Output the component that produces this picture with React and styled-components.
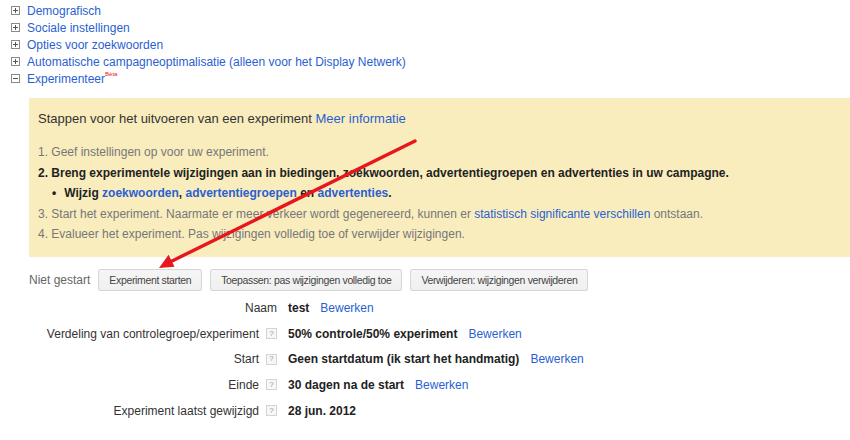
import React from "react";
import styled, { createGlobalStyle } from "styled-components";

const GlobalStyle = createGlobalStyle`
  html, body {
    margin: 0;
    padding: 0;
    background: #fff;
  }
  body {
    font-family: "Liberation Sans", Arial, sans-serif;
    font-size: 12px;
    color: #333;
  }
`;

const sections = [
  { label: "Demografisch", open: false },
  { label: "Sociale instellingen", open: false },
  { label: "Opties voor zoekwoorden", open: false },
  {
    label: "Automatische campagneoptimalisatie (alleen voor het Display Netwerk)",
    open: false,
  },
  { label: "Experimenteer", open: true, beta: true },
];

const details = [
  { label: "Naam", value: "test", edit: true },
  {
    label: "Verdeling van controlegroep/experiment",
    help: true,
    value: "50% controle/50% experiment",
    edit: true,
  },
  {
    label: "Start",
    help: true,
    value: "Geen startdatum (ik start het handmatig)",
    edit: true,
  },
  { label: "Einde", help: true, value: "30 dagen na de start", edit: true },
  { label: "Experiment laatst gewijzigd", help: true, value: "28 jun. 2012" },
];

const ToggleIcon = ({ open }) => (
  <svg width="9" height="9" viewBox="0 0 9 9">
    <rect x="0.5" y="0.5" width="8" height="8" fill="#fff" stroke="#8a8a8a" />
    <line x1="2" y1="4.5" x2="7" y2="4.5" stroke="#555" />
    {!open && <line x1="4.5" y1="2" x2="4.5" y2="7" stroke="#555" />}
  </svg>
);

const App = () => {
  return (
    <>
      <GlobalStyle />
      <Page>
        <SectionList>
          {sections.map((s) => (
            <SectionItem key={s.label}>
              <ToggleIcon open={s.open} />
              <Link href="#">
                {s.label}
                {s.beta && <Beta>Bèta</Beta>}
              </Link>
            </SectionItem>
          ))}
        </SectionList>

        <StepsPanel>
          <PanelTitle>
            Stappen voor het uitvoeren van een experiment{" "}
            <Link href="#">Meer informatie</Link>
          </PanelTitle>
          <Steps>
            <Step>1. Geef instellingen op voor uw experiment.</Step>
            <Step active>
              2. Breng experimentele wijzigingen aan in biedingen, zoekwoorden,
              advertentiegroepen en advertenties in uw campagne.
            </Step>
            <SubStep>
              Wijzig <Link href="#">zoekwoorden</Link>,{" "}
              <Link href="#">advertentiegroepen</Link> en{" "}
              <Link href="#">advertenties</Link>.
            </SubStep>
            <Step>
              3. Start het experiment. Naarmate er meer verkeer wordt
              gegenereerd, kunnen er{" "}
              <Link href="#">statistisch significante verschillen</Link>{" "}
              ontstaan.
            </Step>
            <Step>
              4. Evalueer het experiment. Pas wijzigingen volledig toe of
              verwijder wijzigingen.
            </Step>
          </Steps>
        </StepsPanel>

        <ActionBar>
          <Status>Niet gestart</Status>
          <Button>Experiment starten</Button>
          <Button>Toepassen: pas wijzigingen volledig toe</Button>
          <Button>Verwijderen: wijzigingen verwijderen</Button>
        </ActionBar>

        <DetailsGrid>
          {details.map((d) => (
            <React.Fragment key={d.label}>
              <DetailLabel>
                {d.label}
                {d.help && <HelpIcon>?</HelpIcon>}
              </DetailLabel>
              <DetailValue>
                <strong>{d.value}</strong>
                {d.edit && <Link href="#">Bewerken</Link>}
              </DetailValue>
            </React.Fragment>
          ))}
        </DetailsGrid>

        <ArrowOverlay width="850" height="440" viewBox="0 0 850 440">
          <line
            x1="415"
            y1="141"
            x2="170"
            y2="262"
            stroke="#e8161d"
            strokeWidth="3.4"
            strokeLinecap="round"
          />
          <polygon
            points="159,268 174.5,266.8 168.6,254.8"
            fill="#e8161d"
          />
        </ArrowOverlay>
      </Page>
    </>
  );
};

const Page = styled.div`
  position: relative;
  width: 850px;
  height: 440px;
  overflow: hidden;
  padding-top: 2px;
  box-sizing: border-box;
`;

const Link = styled.a`
  color: #2a5fd2;
  text-decoration: none;
`;

const SectionList = styled.ul`
  list-style: none;
  margin: 0;
  padding: 0 0 0 11px;
`;

const SectionItem = styled.li`
  display: flex;
  align-items: center;
  gap: 7px;
  height: 17px;
  font-size: 12px;

  svg {
    flex: none;
  }
`;

const Beta = styled.sup`
  color: #e02020;
  font-size: 6px;
  vertical-align: top;
  position: relative;
  top: -1px;
`;

const StepsPanel = styled.div`
  margin: 11px 0 0 29px;
  background: #f9edbe;
  padding: 13px 9px 12px;
  height: 159px;
  box-sizing: border-box;
`;

const PanelTitle = styled.div`
  font-size: 13px;
  color: #333;
  line-height: 16px;
`;

const Steps = styled.div`
  margin-top: 15px;
  display: flex;
  flex-direction: column;
`;

const Step = styled.div`
  line-height: 20.5px;
  font-size: 12px;
  color: ${(p) => (p.active ? "#222" : "#777")};
  font-weight: ${(p) => (p.active ? "bold" : "normal")};
`;

const SubStep = styled.div`
  padding-left: 14px;
  line-height: 20.5px;
  font-weight: bold;
  color: #222;

  &::before {
    content: "•";
    margin-right: 8px;
  }
`;

const ActionBar = styled.div`
  display: flex;
  align-items: center;
  gap: 8px;
  margin: 12px 0 0 29px;
`;

const Status = styled.span`
  color: #666;
  font-size: 12px;
`;

const Button = styled.button`
  height: 22px;
  padding: 0 10px;
  font-family: "Liberation Sans", Arial, sans-serif;
  font-size: 10.5px;
  letter-spacing: -0.35px;
  color: #444;
  background: linear-gradient(#f5f5f5, #f0f0f0);
  border: 1px solid #d6d6d6;
  border-radius: 2px;
  cursor: default;
`;

const DetailsGrid = styled.div`
  display: grid;
  grid-template-columns: 277px auto;
  column-gap: 11px;
  grid-auto-rows: 25.7px;
  margin-top: 4px;
  align-items: center;
  font-size: 12px;
`;

const DetailLabel = styled.div`
  display: flex;
  justify-content: flex-end;
  align-items: center;
  gap: 7px;
  color: #333;
`;

const HelpIcon = styled.span`
  display: inline-flex;
  align-items: center;
  justify-content: center;
  width: 9px;
  height: 9px;
  border: 1px solid #d4d4d4;
  background: #f7f7f7;
  color: #999;
  font-size: 8px;
  line-height: 1;
`;

const DetailValue = styled.div`
  display: flex;
  align-items: center;
  gap: 11px;
  color: #222;
`;

const ArrowOverlay = styled.svg`
  position: absolute;
  left: 0;
  top: 0;
  pointer-events: none;
`;

export default App;
